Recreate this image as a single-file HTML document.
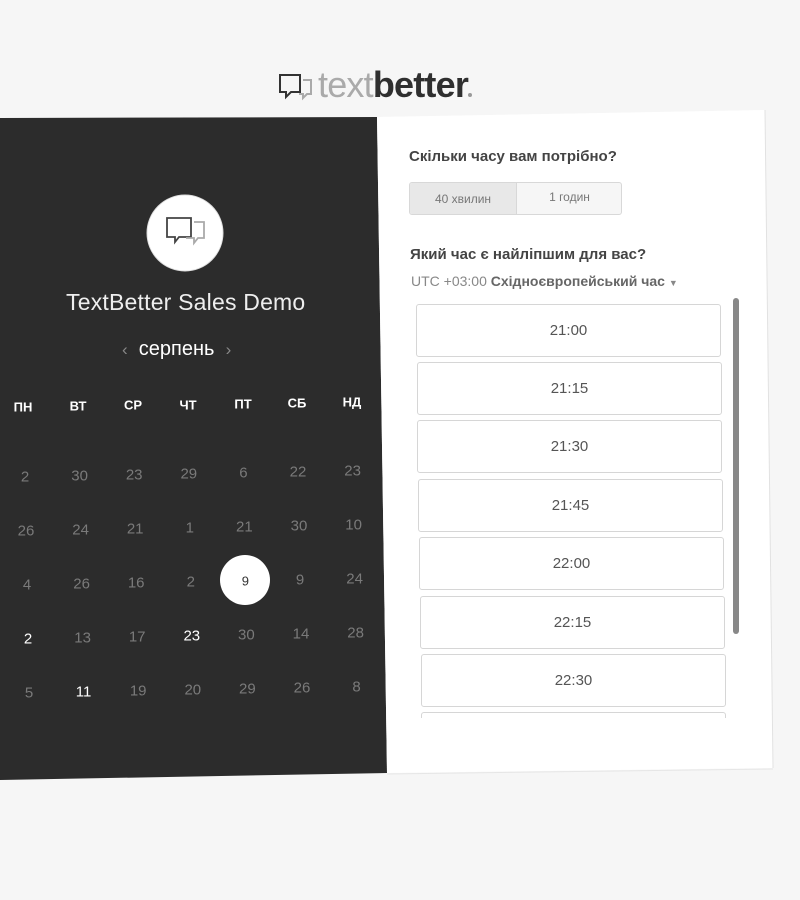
<!DOCTYPE html>
<html><head><meta charset="utf-8">
<style>
*{margin:0;padding:0;box-sizing:border-box}
body{width:800px;height:900px;background:#f6f6f6;position:relative;overflow:hidden;font-family:"Liberation Sans","DejaVu Sans",sans-serif}
.a{position:absolute;white-space:nowrap}
.n{position:absolute;transform:translate(-50%,-50%);font-size:15px;color:#7a7a7a}
.w{color:#fff}
.h{position:absolute;transform:translate(-50%,-50%);font-size:13px;font-weight:bold;color:#fff}
.slot{position:absolute;width:305px;height:53px;border:1px solid #d6d6d6;border-radius:3px;background:#fff;text-align:center;line-height:51px;font-size:15px;color:#555}
</style></head><body>
<svg class="a" style="left:0;top:0" width="800" height="900">
<polygon points="0,118 377,117 387,773 0,780" fill="#2c2c2c"/>
<polygon points="377,117 765,110 773,768 387,773" fill="#fff"/>
<line x1="765" y1="110" x2="773" y2="768" stroke="#e2e2e2"/>
<line x1="387" y1="774" x2="773" y2="769" stroke="#e6e6e6"/>
<g fill="none" stroke-width="2">
<path d="M280 75 h20 v17 h-9 l-5 5 v-5 h-6 z" stroke="#333"/>
<path d="M303 80 h8 v14 h-4 l-4 4 v-4 h-4" stroke="#aaa"/>
</g>
<circle cx="185" cy="233" r="38" fill="#fff" stroke="#ddd"/>
<g fill="none" stroke-width="1.8">
<path d="M167 218 h24 v19 h-12 l-4 5 v-5 h-8 z" stroke="#444"/>
<path d="M194 222 h10 v16 h-6 l-4 5 v-5 h-8" stroke="#aaa"/>
</g>
<circle cx="245" cy="580" r="25" fill="#fff"/>
<rect x="733" y="298" width="6" height="336" rx="3" fill="#888"/>
<circle cx="470" cy="95" r="2" fill="#999"/>
</svg>
<div class="a" style="left:318px;top:66px;font-size:36px;letter-spacing:-0.8px;line-height:38px"><span style="color:#aaa">text</span><span style="color:#2f2f2f;font-weight:bold">better</span></div>

<div class="a" style="left:66px;top:289px;font-size:23px;color:#eee;letter-spacing:0.2px">TextBetter Sales Demo</div>
<div class="a" style="left:122px;top:338px;font-size:20px;color:#fff"><span style="color:#888;font-size:17px">‹</span>&nbsp; серпень &nbsp;<span style="color:#888;font-size:17px">›</span></div>

<div class="h" style="left:23px;top:407px">ПН</div>
<div class="h" style="left:78px;top:406px">ВТ</div>
<div class="h" style="left:133px;top:405px">СР</div>
<div class="h" style="left:188px;top:405px">ЧТ</div>
<div class="h" style="left:243px;top:404px">ПТ</div>
<div class="h" style="left:297px;top:403px">СБ</div>
<div class="h" style="left:352px;top:402px">НД</div>

<div id="g"></div>
<script>
var d=[["2","30","23","29","6","22","23"],["26","24","21","1","21","30","10"],["4","26","16","2","9","9","24"],["2","13","17","23","30","14","28"],["5","11","19","20","29","26","8"]];
var wh={"3,0":1,"3,3":1,"4,1":1};var h="";
for(var r=0;r<5;r++)for(var c=0;c<7;c++){var x=25+54.6*c+r*1,y=477+54*r-1*c;
var cls="n"+(wh[r+","+c]?" w":"");var st="";if(r==2&&c==4){st="color:#333;font-size:13px";}
h+='<div class="'+cls+'" style="left:'+x+'px;top:'+y+'px;'+st+'">'+d[r][c]+'</div>';}
document.getElementById("g").innerHTML=h;
</script>

<div class="a" style="left:409px;top:148px;font-size:15px;font-weight:bold;color:#444">Скільки часу вам потрібно?</div>
<div class="a" style="left:409px;top:182px;width:213px;height:33px;border:1px solid #d8d8d8;border-radius:3px;background:#f6f6f6;overflow:hidden">
<div class="a" style="left:0;top:0;width:107px;height:31px;background:#e8e8e8;border-right:1px solid #d8d8d8;font-size:12px;color:#777;text-align:center;line-height:32px">40 хвилин</div>
<div class="a" style="left:107px;top:0;width:105px;height:31px;font-size:12px;color:#777;text-align:center;line-height:29px">1 годин</div>
</div>
<div class="a" style="left:410px;top:246px;font-size:15px;font-weight:bold;color:#444">Який час є найліпшим для вас?</div>
<div class="a" style="left:411px;top:273px;font-size:14px;color:#888">UTC +03:00 <b style="color:#666">Східноєвропейський час</b> <span style="font-size:9px">▼</span></div>

<div style="position:absolute;left:0;top:0;width:800px;height:718px;overflow:hidden">
<div class="slot" style="left:416px;top:304px">21:00</div>
<div class="slot" style="left:417px;top:362px">21:15</div>
<div class="slot" style="left:417px;top:420px">21:30</div>
<div class="slot" style="left:418px;top:479px">21:45</div>
<div class="slot" style="left:419px;top:537px">22:00</div>
<div class="slot" style="left:420px;top:596px">22:15</div>
<div class="slot" style="left:421px;top:654px">22:30</div>
<div class="slot" style="left:421px;top:712px">22:45</div>
</div>
</body></html>
